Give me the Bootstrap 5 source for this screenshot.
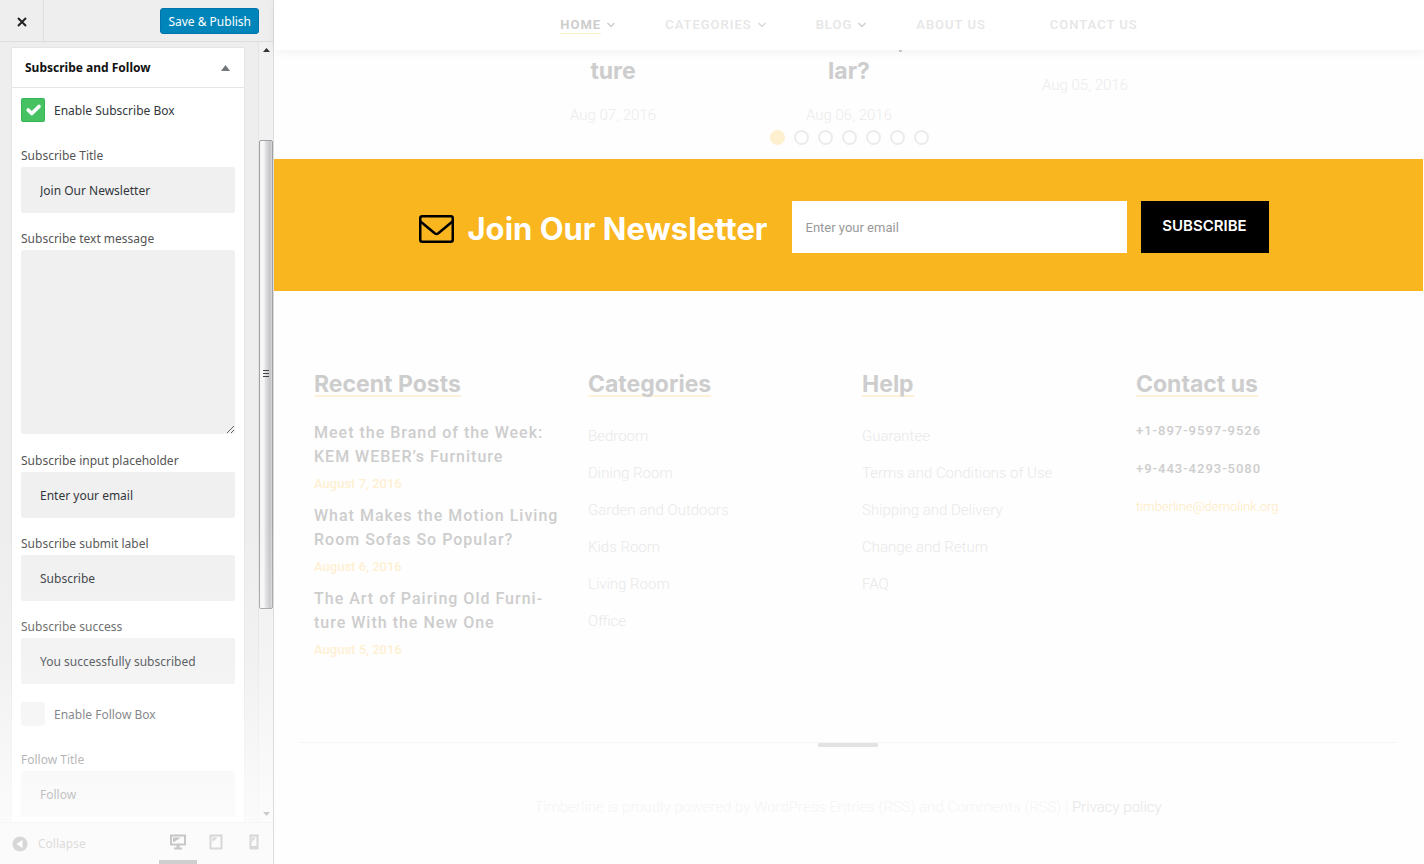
<!DOCTYPE html>
<html lang="en">
<head>
<meta charset="utf-8">
<meta name="viewport" content="width=device-width, initial-scale=1">
<title>Timberline – Customize</title>
<link href="https://cdn.jsdelivr.net/npm/bootstrap@5.3.0/dist/css/bootstrap.min.css" rel="stylesheet">
<style>
  body { font-family: Roboto, "Liberation Sans", sans-serif; background: #fefefe; color: #cdcdcd; }
  a { text-decoration: none; color: inherit; }

  /* Customizer panel */
  .customizer { width: 274px; background: #eee; border-right: 1px solid #ddd; font: 13px/20px "Noto Sans", "Open Sans", sans-serif; color: #32373c; }
  .cz-head { height: 42px; border-bottom: 1px solid #ddd; }
  .cz-close { width: 44px; border: 0; border-right: 1px solid #ddd; background: none; color: #222; }
  .cz-save { font-size: 12px; line-height: 18px; padding: 4px 7px 2px; margin: 8px 14px 7px 0; color: #fff; background: #0085ba; border: 1px solid #0073aa; border-radius: 3px; }
  .cz-body { padding: 5px 13px 0 11px; }
  .cz-box { background: #fff; border: 1px solid #e5e5e5; border-bottom: 0; }
  .cz-title { height: 40px; padding: 0 14px 0 13px; border-bottom: 1px solid #e5e5e5; font-size: 12px; font-weight: 700; color: #111; }
  .cz-fields { padding: 10px 9px 4px; font-size: 12px; }
  .cz-check { gap: 9px; margin-bottom: 23px; }
  .cz-check label { line-height: 22px; padding-top: 2px; }
  .cz-check .form-check-input { width: 24px; height: 24px; margin: 0; border: 0; border-radius: 2px; background-color: #f0f0f0; background-size: 24px; }
  .cz-check .form-check-input:checked { background-color: #46c263; box-shadow: inset 0 0 0 1px #35b454; }
  .cz-label { display: block; line-height: 22px; color: #555; }
  .cz-field { height: 46px; margin-bottom: 15px; padding: 0 19px; border: 0; border-radius: 2px; background: #f0f0f0; font-size: 12px; color: #32373c; }
  textarea.cz-field { height: 184px; min-height: 184px; margin-bottom: 16px; }
  .cz-field.before-check { margin-bottom: 18px; }
  .cz-field.last { margin-bottom: 0; }
  .cz-scroll { width: 15px; background: #f1f1f1; border-left: 1px solid #e4e4e4; }
  .cz-arrow { height: 16px; }
  .gap-top { flex: 82 0 0; }
  .gap-bottom { flex: 198 0 0; }
  .cz-thumb { flex: 468 0 0; border: 1px solid #a0a1a4; border-radius: 2px; background: linear-gradient(90deg, #f6f6f6 0 30%, #dedee0 50%, #c2c3c6 85%, #dcdcdc); }
  .cz-foot { height: 42px; border-top: 1px solid #ddd; padding-left: 12px; color: #666; font-size: 12px; }
  .cz-foot button { border: 0; background: none; padding: 0; gap: 10px; color: inherit; }
  .cz-foot .device { width: 38px; height: 41px; color: #555; border-bottom: 4px solid transparent; }
  .cz-foot .device.active { border-bottom-color: #222; color: #111; }
  .cz-fade { bottom: 0; height: 340px; pointer-events: none; background: linear-gradient(rgba(255,255,255,0), rgba(255,255,255,.2) 40%, rgba(255,255,255,.4) 56%, rgba(255,255,255,.58) 70%, rgba(255,255,255,.75) 86%, rgba(255,255,255,.78)); }

  /* Site preview */
  .site-nav { height: 50px; background: #fff; box-shadow: 0 2px 10px rgba(0,0,0,.05); padding-left: 0; }
  .site-nav a { font-size: 13px; line-height: 16px; font-weight: 500; letter-spacing: 1px; color: #e6e6e6; }
  .site-nav a.current { font-weight: 700; color: #cdcdcd; border-bottom: 1px solid #fdeecb; }
  .site-nav li { gap: 6px; }
  .nav-items { gap: 50px; }
  .nav-items .wide { margin-right: 14px; }
  .slides { height: 109px; }
  .slide-row { max-width: 708px; }
  .slide-title { font: 700 23px/32px Inter, sans-serif; margin: 5px 0 17px; }
  .slide-title.cut::before { content: ""; position: absolute; top: 0; left: 50%; width: 3px; height: 2px; margin-left: 50px; background: #cdcdcd; }
  .slide-date { font-size: 15px; line-height: 22px; font-weight: 300; color: #ececec; }
  .slide-date.high { margin-top: 24px; }
  .dots { bottom: 14px; gap: 9px; }
  .dots button { width: 15px; height: 15px; padding: 0; border: 2px solid #ebebeb; border-radius: 50%; background: none; }
  .dots button.on { border-color: #feefcf; background: #feefcf; }

  .newsletter { background: #f9b61f; padding: 42px 10px 38px 0; margin-right: 1px; }
  .newsletter form { max-width: 850px; }
  .news-title { flex: 0 0 373px; gap: 14px; padding-top: 3px; }
  .news-title h2 { font: 700 31px/40px Inter, sans-serif; color: #fff; margin: 0; white-space: nowrap; }
  .news-input { height: 52px; border: 0; border-radius: 0; padding: 0 14px; font-size: 13px; }
  .news-input::placeholder { color: #999; }
  .news-btn { flex: 0 0 128px; height: 52px; margin-left: 14px; border: 0; background: #000; color: #fff; font: 600 15px/20px Inter, sans-serif; padding-bottom: 4px; }

  .foot-cols { padding: 82px 28px 0 26px; }
  .foot-cols .row > div { padding: 0 14px; }
  .foot-title { display: inline-block; font: 700 23px/22px Inter, sans-serif; border-bottom: 2px solid #fef1d8; margin: 0 0 24px; }
  .post { margin-bottom: 11px; }
  .post h3 { font-size: 16px; line-height: 24px; font-weight: 500; letter-spacing: 1px; margin: 0 0 5px; white-space: nowrap; }
  .post time { display: block; font-size: 13px; line-height: 19px; font-weight: 500; color: #fff0d2; }
  .foot-list { padding-top: 5px; }
  .foot-list li { font-size: 15px; line-height: 21px; font-weight: 300; color: #e9e9e9; margin-bottom: 16px; }
  .phone { display: block; font-size: 13px; line-height: 20px; font-weight: 500; letter-spacing: 1px; margin-bottom: 18px; }
  .mail { display: block; font-size: 13px; line-height: 20px; font-weight: 300; color: #feeac0; }
  .copy { margin: 72px 28px 0 26px; border-top: 1px solid #f5f5f5; padding-bottom: 44px; }
  .copy-mark { width: 60px; height: 4px; background: #e3e3e3; }
  .copy p { font-size: 15px; line-height: 24px; font-weight: 300; color: #f5f5f5; margin: 48px 0 0; }
  .copy a { color: #e6e6e6; }
</style>
</head>
<body>
<div class="d-flex min-vh-100">

  <aside class="customizer d-flex flex-column flex-shrink-0 position-relative">
    <div class="cz-head d-flex justify-content-between">
      <button class="cz-close" type="button" aria-label="Close">
        <svg width="10" height="10" viewBox="0 0 10 10" stroke="currentColor" stroke-width="2"><path d="M1 1l8 8M9 1L1 9"/></svg>
      </button>
      <button class="cz-save" type="button">Save &amp; Publish</button>
    </div>

    <div class="d-flex flex-grow-1">
      <div class="cz-body d-flex flex-grow-1">
        <form class="cz-box w-100">
          <div class="cz-title d-flex align-items-center justify-content-between">
            <span>Subscribe and Follow</span>
            <svg width="9" height="6" viewBox="0 0 9 6"><path d="M0 6L4.500 0 9 6z" fill="#72777c"/></svg>
          </div>
          <div class="cz-fields">
            <div class="cz-check d-flex align-items-center">
              <input class="form-check-input" type="checkbox" id="enable-sub" checked>
              <label for="enable-sub">Enable Subscribe Box</label>
            </div>
            <label class="cz-label" for="s-title">Subscribe Title</label>
            <input class="cz-field d-block w-100" id="s-title" type="text" value="Join Our Newsletter">
            <label class="cz-label" for="s-msg">Subscribe text message</label>
            <textarea class="cz-field d-block w-100" id="s-msg"></textarea>
            <label class="cz-label" for="s-ph">Subscribe input placeholder</label>
            <input class="cz-field d-block w-100" id="s-ph" type="text" value="Enter your email">
            <label class="cz-label" for="s-btn">Subscribe submit label</label>
            <input class="cz-field d-block w-100" id="s-btn" type="text" value="Subscribe">
            <label class="cz-label" for="s-ok">Subscribe success</label>
            <input class="cz-field before-check d-block w-100" id="s-ok" type="text" value="You successfully subscribed">
            <div class="cz-check d-flex align-items-center">
              <input class="form-check-input" type="checkbox" id="enable-follow">
              <label for="enable-follow">Enable Follow Box</label>
            </div>
            <label class="cz-label" for="f-title">Follow Title</label>
            <input class="cz-field last d-block w-100" id="f-title" type="text" value="Follow">
          </div>
        </form>
      </div>
      <div class="cz-scroll d-flex flex-column" aria-hidden="true">
        <div class="cz-arrow d-flex align-items-center justify-content-center"><svg width="7" height="4" viewBox="0 0 7 4"><path d="M0 4L3.500 0 7 4z" fill="#333"/></svg></div>
        <div class="gap-top"></div>
        <div class="cz-thumb d-flex align-items-center justify-content-center"><svg width="6" height="8" viewBox="0 0 6 8" stroke="#444"><path d="M0 .5h6M0 3.500h6M0 6.500h6"/></svg></div>
        <div class="gap-bottom"></div>
        <div class="cz-arrow d-flex align-items-center justify-content-center"><svg width="7" height="4" viewBox="0 0 7 4"><path d="M0 0L3.500 4 7 0z" fill="#333"/></svg></div>
      </div>
    </div>

    <div class="cz-foot d-flex align-items-center justify-content-between">
      <button type="button" class="d-flex align-items-center">
        <svg width="16" height="16" viewBox="0 0 16 16"><circle cx="8" cy="8" r="7.500" fill="#555"/><path d="M10.500 4v8L4.500 8z" fill="#fff"/></svg>
        <span>Collapse</span>
      </button>
      <div class="d-flex">
        <button type="button" class="device active" aria-label="Desktop">
          <svg width="16" height="16" viewBox="0 0 16 16"><path d="M1 1.500h14v9H1z" fill="none" stroke="currentColor" stroke-width="2"/><path d="M3 3.500h8L4 8H3zM6.500 11h3v2.500H12V15.500H4v-2h2.500z" fill="currentColor"/></svg>
        </button>
        <button type="button" class="device" aria-label="Tablet">
          <svg width="14" height="16" viewBox="0 0 14 16"><path d="M1.500 1.500h11v13h-11z" fill="none" stroke="currentColor" stroke-width="2"/><path d="M3.500 3.500h5l-5 4.500z" fill="currentColor"/></svg>
        </button>
        <button type="button" class="device" aria-label="Phone">
          <svg width="10" height="16" viewBox="0 0 10 16"><path d="M1.500 1.500h7v13h-7z" fill="none" stroke="currentColor" stroke-width="2"/><path d="M3 3.500h3.500L3 8zM1 12h8v3H1z" fill="currentColor"/></svg>
        </button>
      </div>
    </div>
    <div class="cz-fade position-absolute start-0 w-100"></div>
  </aside>

  <main class="flex-grow-1">
    <nav class="site-nav d-flex align-items-center justify-content-center position-relative z-1">
      <ul class="nav-items list-unstyled d-flex mb-0">
        <li class="d-flex align-items-center"><a class="current" href="#">HOME</a><svg width="8" height="6" viewBox="0 0 8 6" fill="none" stroke="#cdcdcd" stroke-width="1.500"><path d="M.5 1L4 4.500 7.500 1"/></svg></li>
        <li class="d-flex align-items-center"><a href="#">CATEGORIES</a><svg width="8" height="6" viewBox="0 0 8 6" fill="none" stroke="#d8d8d8" stroke-width="1.500"><path d="M.5 1L4 4.500 7.500 1"/></svg></li>
        <li class="d-flex align-items-center"><a href="#">BLOG</a><svg width="8" height="6" viewBox="0 0 8 6" fill="none" stroke="#d0d0d0" stroke-width="1.500"><path d="M.5 1L4 4.500 7.500 1"/></svg></li>
        <li class="wide d-flex align-items-center"><a href="#">ABOUT US</a></li>
        <li class="d-flex align-items-center"><a href="#">CONTACT US</a></li>
      </ul>
    </nav>

    <section class="slides position-relative">
      <div class="slide-row row g-0 mx-auto text-center">
        <div class="col-4"><h3 class="slide-title">ture</h3><div class="slide-date">Aug 07, 2016</div></div>
        <div class="col-4"><h3 class="slide-title cut">lar?</h3><div class="slide-date">Aug 06, 2016</div></div>
        <div class="col-4"><div class="slide-date high">Aug 05, 2016</div></div>
      </div>
      <div class="dots d-flex justify-content-center position-absolute start-0 w-100">
        <button class="on" type="button" aria-label="Slide 1"></button><button type="button" aria-label="Slide 2"></button><button type="button" aria-label="Slide 3"></button><button type="button" aria-label="Slide 4"></button><button type="button" aria-label="Slide 5"></button><button type="button" aria-label="Slide 6"></button><button type="button" aria-label="Slide 7"></button>
      </div>
    </section>

    <section class="newsletter">
      <form class="d-flex align-items-center mx-auto">
        <div class="news-title d-flex align-items-center">
          <svg width="35" height="28" viewBox="0 0 35 28" fill="none" stroke="#000" stroke-width="2.500"><rect x="1.250" y="1.250" width="32.500" height="25.500" rx="2"/><path d="M1.500 6.500L16 18.500q1.500 1 3 0L33.500 6.500" stroke-linejoin="round"/></svg>
          <h2>Join Our Newsletter</h2>
        </div>
        <input class="news-input form-control" type="email" placeholder="Enter your email" aria-label="Enter your email">
        <button class="news-btn" type="submit">SUBSCRIBE</button>
      </form>
    </section>

    <footer>
      <div class="foot-cols">
        <div class="row g-0">
          <div class="col-3">
            <h2 class="foot-title">Recent Posts</h2>
            <article class="post"><h3><a href="#">Meet the Brand of the Week:<br>KEM WEBER’s Furniture</a></h3><time>August 7, 2016</time></article>
            <article class="post"><h3><a href="#">What Makes the Motion Living<br>Room Sofas So Popular?</a></h3><time>August 6, 2016</time></article>
            <article class="post"><h3><a href="#">The Art of Pairing Old Furni-<br>ture With the New One</a></h3><time>August 5, 2016</time></article>
          </div>
          <div class="col-3">
            <h2 class="foot-title">Categories</h2>
            <ul class="foot-list list-unstyled mb-0">
              <li><a href="#">Bedroom</a></li><li><a href="#">Dining Room</a></li><li><a href="#">Garden and Outdoors</a></li><li><a href="#">Kids Room</a></li><li><a href="#">Living Room</a></li><li><a href="#">Office</a></li>
            </ul>
          </div>
          <div class="col-3">
            <h2 class="foot-title">Help</h2>
            <ul class="foot-list list-unstyled mb-0">
              <li><a href="#">Guarantee</a></li><li><a href="#">Terms and Conditions of Use</a></li><li><a href="#">Shipping and Delivery</a></li><li><a href="#">Change and Return</a></li><li><a href="#">FAQ</a></li>
            </ul>
          </div>
          <div class="col-3">
            <h2 class="foot-title">Contact us</h2>
            <a class="phone" href="#">+1-897-9597-9526</a>
            <a class="phone" href="#">+9-443-4293-5080</a>
            <a class="mail" href="#">timberline@demolink.org</a>
          </div>
        </div>
      </div>
      <div class="copy text-center">
        <div class="copy-mark mx-auto"></div>
        <p>Timberline is proudly powered by WordPress Entries (RSS) and Comments (RSS) | <a href="#">Privacy policy</a></p>
      </div>
    </footer>
  </main>
</div>
<script src="https://cdn.jsdelivr.net/npm/bootstrap@5.3.0/dist/js/bootstrap.bundle.min.js"></script>
</body>
</html>
